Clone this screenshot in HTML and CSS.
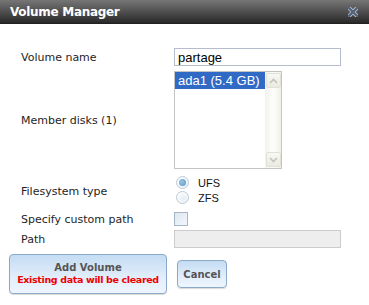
FILE: index.html
```html
<!DOCTYPE html>
<html lang="en">
<head>
  <meta charset="UTF-8">
  <title>Volume Manager</title>
  <link rel="stylesheet" href="styles.css">
</head>
<body>
  <div class="dialog">
    <div class="titlebar">
      <span class="title">Volume Manager</span>
      <svg class="close" width="10" height="10" viewBox="0 0 10 10">
        <path d="M1 1 L9 9 M9 1 L1 9" stroke="#bcc6d2" stroke-width="4" stroke-linecap="square"/>
        <path d="M1 1 L9 9 M9 1 L1 9" stroke="#52637a" stroke-width="2.4" stroke-linecap="square"/>
      </svg>
    </div>

    <form class="form">
      <div class="row row-name">
        <label class="lbl">Volume name</label>
        <input type="text" class="text" value="partage">
      </div>

      <div class="row row-disks">
        <label class="lbl">Member disks (1)</label>
        <div class="listbox">
          <div class="options">
            <div class="option selected">ada1 (5.4 GB)</div>
          </div>
          <div class="scrollbar">
            <span class="sb-btn">
              <svg width="9" height="6" viewBox="0 0 9 6"><path d="M1 5 L4.5 1.5 L8 5" fill="none" stroke="#c4c3b8" stroke-width="1.6"/></svg>
            </span>
            <span class="sb-btn">
              <svg width="9" height="6" viewBox="0 0 9 6"><path d="M1 1 L4.5 4.5 L8 1" fill="none" stroke="#c4c3b8" stroke-width="1.6"/></svg>
            </span>
          </div>
        </div>
      </div>

      <div class="row row-fs">
        <label class="lbl lbl-fs">Filesystem type</label>
        <div class="radios">
          <div class="radio-row"><span class="radio checked"></span>UFS</div>
          <div class="radio-row"><span class="radio"></span>ZFS</div>
        </div>
      </div>

      <div class="row row-check">
        <label class="lbl">Specify custom path</label>
        <span class="checkbox"></span>
      </div>

      <div class="row row-path">
        <label class="lbl">Path</label>
        <input type="text" class="text disabled" disabled>
      </div>
    </form>

    <div class="buttons">
      <button type="button" class="btn btn-add">
        <span class="btn-main">Add Volume</span>
        <span class="btn-warn">Existing data will be cleared</span>
      </button>
      <button type="button" class="btn btn-cancel">Cancel</button>
    </div>
  </div>
</body>
</html>
```

FILE: styles.css
```css
body {
  margin: 0;
  font-family: "DejaVu Sans", Verdana, sans-serif;
  font-size: 11px;
  color: #1e1e1e;
  background: #fff;
}

.dialog {
  width: 369px;
  height: 305px;
  background: #fff;
}

.titlebar {
  height: 24px;
  display: flex;
  align-items: center;
  justify-content: space-between;
  padding: 0 11px 0 10px;
  background: linear-gradient(#767676, #4a4a4a 55%, #2c2c2c 92%, #1e1e1e);
  color: #fff;
}

.title {
  font-weight: bold;
  font-size: 12px;
  letter-spacing: -0.3px;
}

.close {
  display: block;
}

.form {
  padding: 24px 0 0 21px;
}

.row {
  display: flex;
  align-items: center;
}

.lbl {
  width: 153px;
  flex: none;
  line-height: 13px;
}

.lbl-fs {
  padding-top: 3px;
}

.row-name { height: 18px; }
.row-disks { height: 98px; margin-top: 5px; }
.row-fs { height: 30px; margin-top: 6px; }
.row-check { height: 14px; margin-top: 7px; }
.row-path { height: 18px; margin-top: 4px; }

.text {
  box-sizing: border-box;
  width: 167px;
  height: 18px;
  margin: 0;
  padding: 0 3px;
  border: 1px solid #b5bccb;
  font-family: "Liberation Sans", Arial, sans-serif;
  font-size: 13px;
  color: #000;
  outline: none;
}

.text.disabled {
  background: #eeeeee;
  border-color: #cccccc;
}

.listbox {
  box-sizing: border-box;
  width: 108px;
  height: 98px;
  border: 1px solid #c4c4c4;
  display: flex;
}

.options {
  flex: 1;
}

.option {
  height: 17px;
  line-height: 17px;
  padding-left: 3px;
  font-family: "Liberation Sans", Arial, sans-serif;
  font-size: 13px;
}

.option.selected {
  background: #316ac5;
  color: #fff;
}

.scrollbar {
  width: 16px;
  display: flex;
  flex-direction: column;
  justify-content: space-between;
  padding: 1px 0;
  background: linear-gradient(90deg, #f3f2ec, #fdfdfb 50%, #f1f0ea);
}

.sb-btn {
  box-sizing: border-box;
  width: 15px;
  height: 15px;
  margin-left: 1px;
  display: flex;
  align-items: center;
  justify-content: center;
  border: 1px solid #e2e1d8;
  border-radius: 2px;
  background: linear-gradient(#f8f8f4, #ebeae2);
}

.radios {
  display: flex;
  flex-direction: column;
}

.radio-row {
  height: 15px;
  display: flex;
  align-items: center;
  font-family: "Liberation Sans", Arial, sans-serif;
  font-size: 11px;
  color: #111;
}

.radio {
  box-sizing: border-box;
  width: 13px;
  height: 13px;
  margin: 0 9px 0 2px;
  border-radius: 50%;
  border: 1px solid #b9c9d8;
  background: radial-gradient(circle at 60% 60%, #e4ecf3, #fbfcfd 70%);
  position: relative;
}

.radio.checked::after {
  content: "";
  position: absolute;
  left: 2px;
  top: 2px;
  width: 7px;
  height: 7px;
  border-radius: 50%;
  background: radial-gradient(circle at 40% 40%, #9cc4e4, #5b93c6);
}

.checkbox {
  box-sizing: border-box;
  width: 14px;
  height: 14px;
  border: 1px solid #a7b6c6;
  background: linear-gradient(135deg, #dce6f1, #f4f7fb);
}

.buttons {
  display: flex;
  align-items: center;
  gap: 10px;
  padding: 6px 0 0 9px;
}

.btn {
  box-sizing: border-box;
  margin: 0;
  border: 1px solid #8ba9c8;
  border-radius: 4px;
  background: linear-gradient(#c4dcf3, #e2eefb 60%, #eef5fd);
  box-shadow: 0 1px 1px rgba(0, 0, 0, 0.15);
  font-family: "DejaVu Sans", Verdana, sans-serif;
  font-weight: bold;
  font-size: 10px;
  cursor: pointer;
}

.btn-add {
  width: 158px;
  height: 40px;
  padding: 0;
  display: flex;
  flex-direction: column;
  align-items: center;
  justify-content: center;
  line-height: 12px;
  white-space: nowrap;
}

.btn-main {
  color: #555;
}

.btn-warn {
  color: #f00000;
  font-size: 9.5px;
  letter-spacing: -0.35px;
}

.btn-cancel {
  width: 50px;
  height: 28px;
  padding: 0;
  color: #555;
}
```
